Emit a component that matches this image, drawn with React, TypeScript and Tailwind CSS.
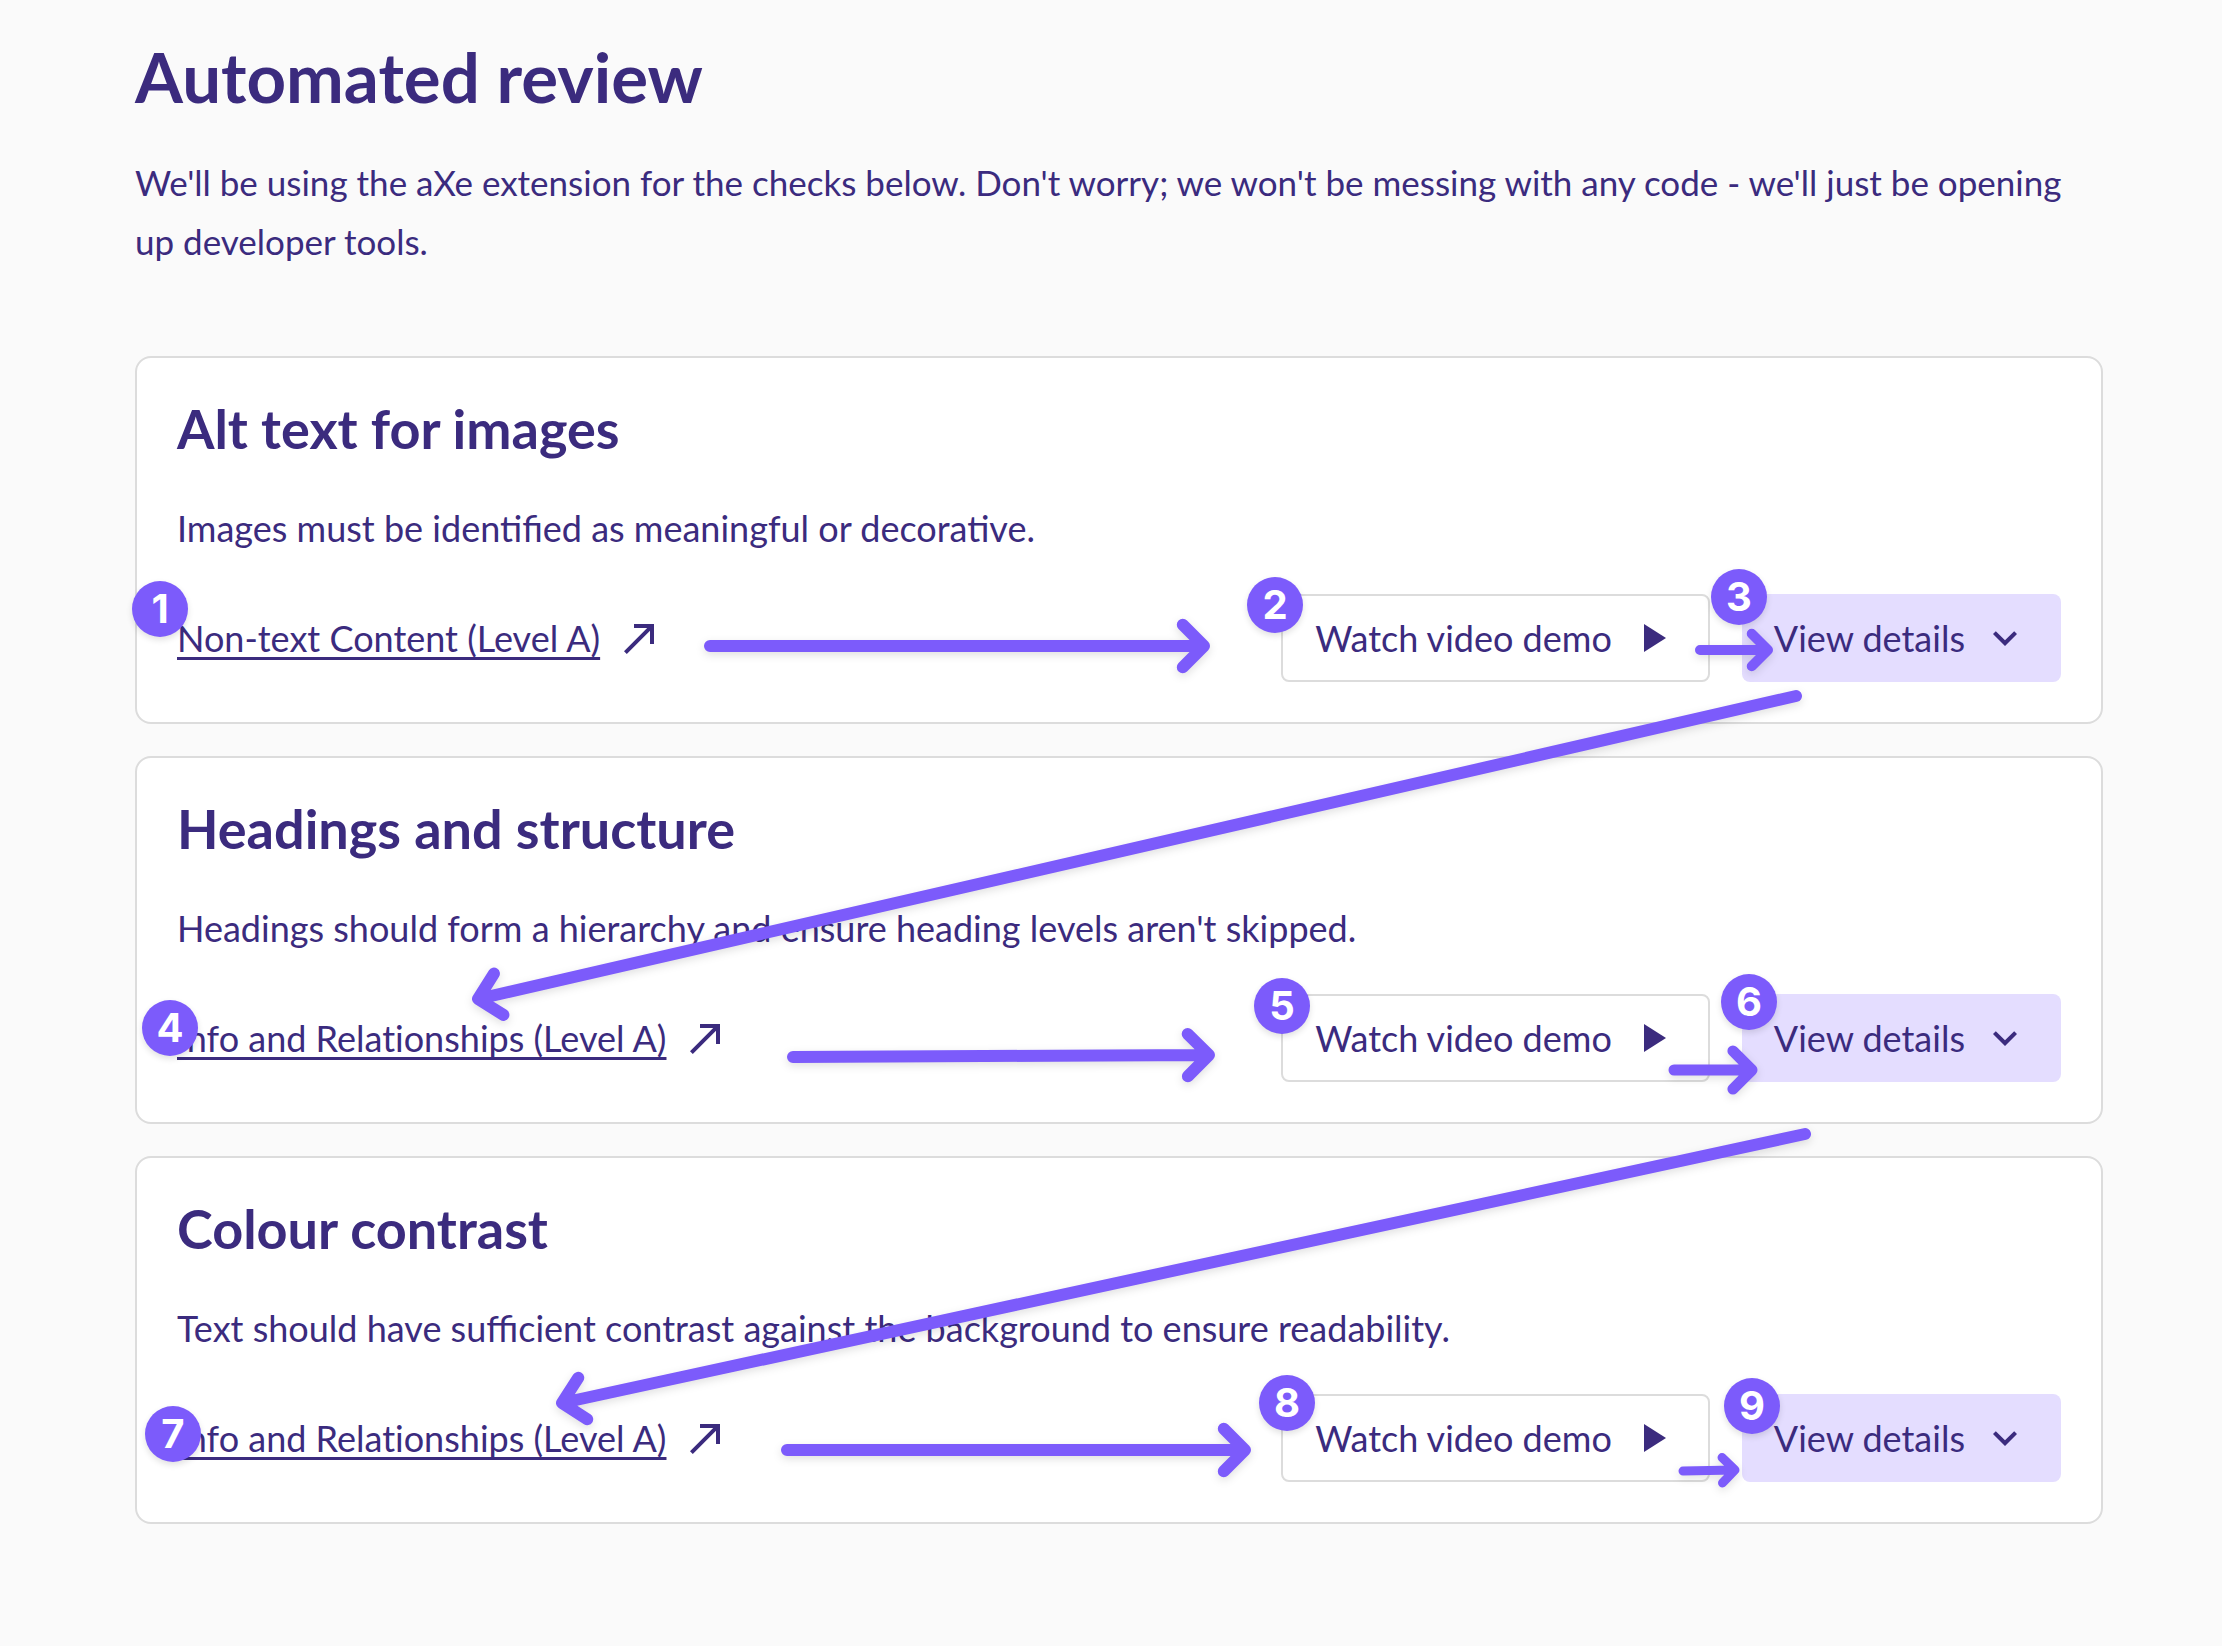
import { MdCallMade, MdKeyboardArrowDown, MdPlayArrow } from "react-icons/md";

type Check = { title: string; description: string; criterion: string };

const checks: Check[] = [
  {
    title: "Alt text for images",
    description: "Images must be identified as meaningful or decorative.",
    criterion: "Non-text Content (Level A)",
  },
  {
    title: "Headings and structure",
    description: "Headings should form a hierarchy and ensure heading levels aren't skipped.",
    criterion: "Info and Relationships (Level A)",
  },
  {
    title: "Colour contrast",
    description: "Text should have sufficient contrast against the background to ensure readability.",
    criterion: "Info and Relationships (Level A)",
  },
];

// Focus-order stops, by the centre of each badge.
const stops = [
  { x: 160, y: 609 },
  { x: 1275, y: 605 },
  { x: 1739, y: 597 },
  { x: 170, y: 1028 },
  { x: 1282, y: 1006 },
  { x: 1749, y: 1002 },
  { x: 173, y: 1434 },
  { x: 1287, y: 1403 },
  { x: 1752, y: 1406 },
];

type ArrowProps = { from: [number, number]; to: [number, number]; head: number; width: number };

const arrows: ArrowProps[] = [
  { from: [710, 646], to: [1204, 646], head: 30, width: 12 },
  { from: [1700, 650], to: [1768, 650], head: 23, width: 10 },
  { from: [1796, 696], to: [478, 999], head: 30, width: 12 },
  { from: [793, 1057], to: [1209, 1055], head: 30, width: 12 },
  { from: [1674, 1070], to: [1752, 1070], head: 27, width: 11 },
  { from: [1805, 1134], to: [562, 1403], head: 30, width: 12 },
  { from: [787, 1450], to: [1245, 1450], head: 30, width: 12 },
  { from: [1683, 1471], to: [1735, 1470], head: 18, width: 9 },
];

function Arrow({ from, to, head, width }: ArrowProps) {
  const angle = Math.atan2(from[1] - to[1], from[0] - to[0]);
  const arm = (turn: number) =>
    `${to[0] + head * Math.cos(angle + turn)} ${to[1] + head * Math.sin(angle + turn)}`;
  return (
    <path
      d={`M${from.join(" ")}L${to.join(" ")}M${arm(Math.PI / 4)}L${to.join(" ")}L${arm(-Math.PI / 4)}`}
      strokeWidth={width}
    />
  );
}

function FocusOrder() {
  return (
    <div className="pointer-events-none absolute inset-0">
      <svg
        className="absolute top-0 left-0 h-[1646px] w-[2222px] fill-none stroke-[#7c5bfb] drop-shadow-[0_3px_4px_rgba(0,0,0,0.12)]"
        viewBox="0 0 2222 1646"
        strokeLinecap="round"
        strokeLinejoin="round"
        aria-hidden="true"
      >
        {arrows.map((arrow, i) => (
          <Arrow key={i} {...arrow} />
        ))}
      </svg>
      {stops.map(({ x, y }, i) => (
        <span
          key={i}
          className="absolute flex size-14 -translate-1/2 items-center justify-center rounded-full bg-[#7c5bfb] font-[Inter,sans-serif] text-[40px] leading-none font-bold text-white shadow-[0_3px_6px_rgba(0,0,0,0.12)]"
          style={{ left: x, top: y }}
        >
          {i + 1}
        </span>
      ))}
    </div>
  );
}

function CheckCard({ title, description, criterion }: Check) {
  return (
    <section className="rounded-2xl border-2 border-[#dcdcdc] bg-white p-10">
      <h2 className="text-[54px] leading-[62px] font-bold">{title}</h2>
      <p className="mt-[39px] leading-[59px]">{description}</p>
      <div className="mt-9 flex items-center justify-between">
        <a href="#criterion" className="flex items-center gap-4 [font-variant-ligatures:no-common-ligatures]">
          <span className="underline decoration-3 underline-offset-5 [text-decoration-skip-ink:none]">
            {criterion}
          </span>
          <MdCallMade className="size-12" aria-hidden="true" />
        </a>
        <div className="flex gap-8">
          <button
            type="button"
            className="flex h-[88px] items-center gap-4 rounded-lg border-2 border-[#dcdcdc] bg-white px-8"
          >
            Watch video demo
            <MdPlayArrow className="size-12" aria-hidden="true" />
          </button>
          <button type="button" className="flex h-[88px] items-center gap-4 rounded-lg bg-[#e4ddff] px-8">
            View details
            <MdKeyboardArrowDown className="size-12" aria-hidden="true" />
          </button>
        </div>
      </div>
    </section>
  );
}

export default function App() {
  return (
    <main className="relative min-h-screen overflow-hidden bg-[#fafafa] pt-[37px] pr-[119px] pb-[122px] pl-[135px] font-[Lato,sans-serif] text-[36px] text-[#3b2b7e]">
      <h1 className="text-[69px] leading-[80px] font-bold">Automated review</h1>
      <p className="mt-9 text-[35px] leading-[59px]">
        We'll be using the aXe extension for the checks below. Don't worry; we won't be messing with any code - we'll
        just be opening up developer tools.
      </p>
      <div className="mt-[85px] flex flex-col gap-8">
        {checks.map((check) => (
          <CheckCard key={check.title} {...check} />
        ))}
      </div>
      <FocusOrder />
    </main>
  );
}
